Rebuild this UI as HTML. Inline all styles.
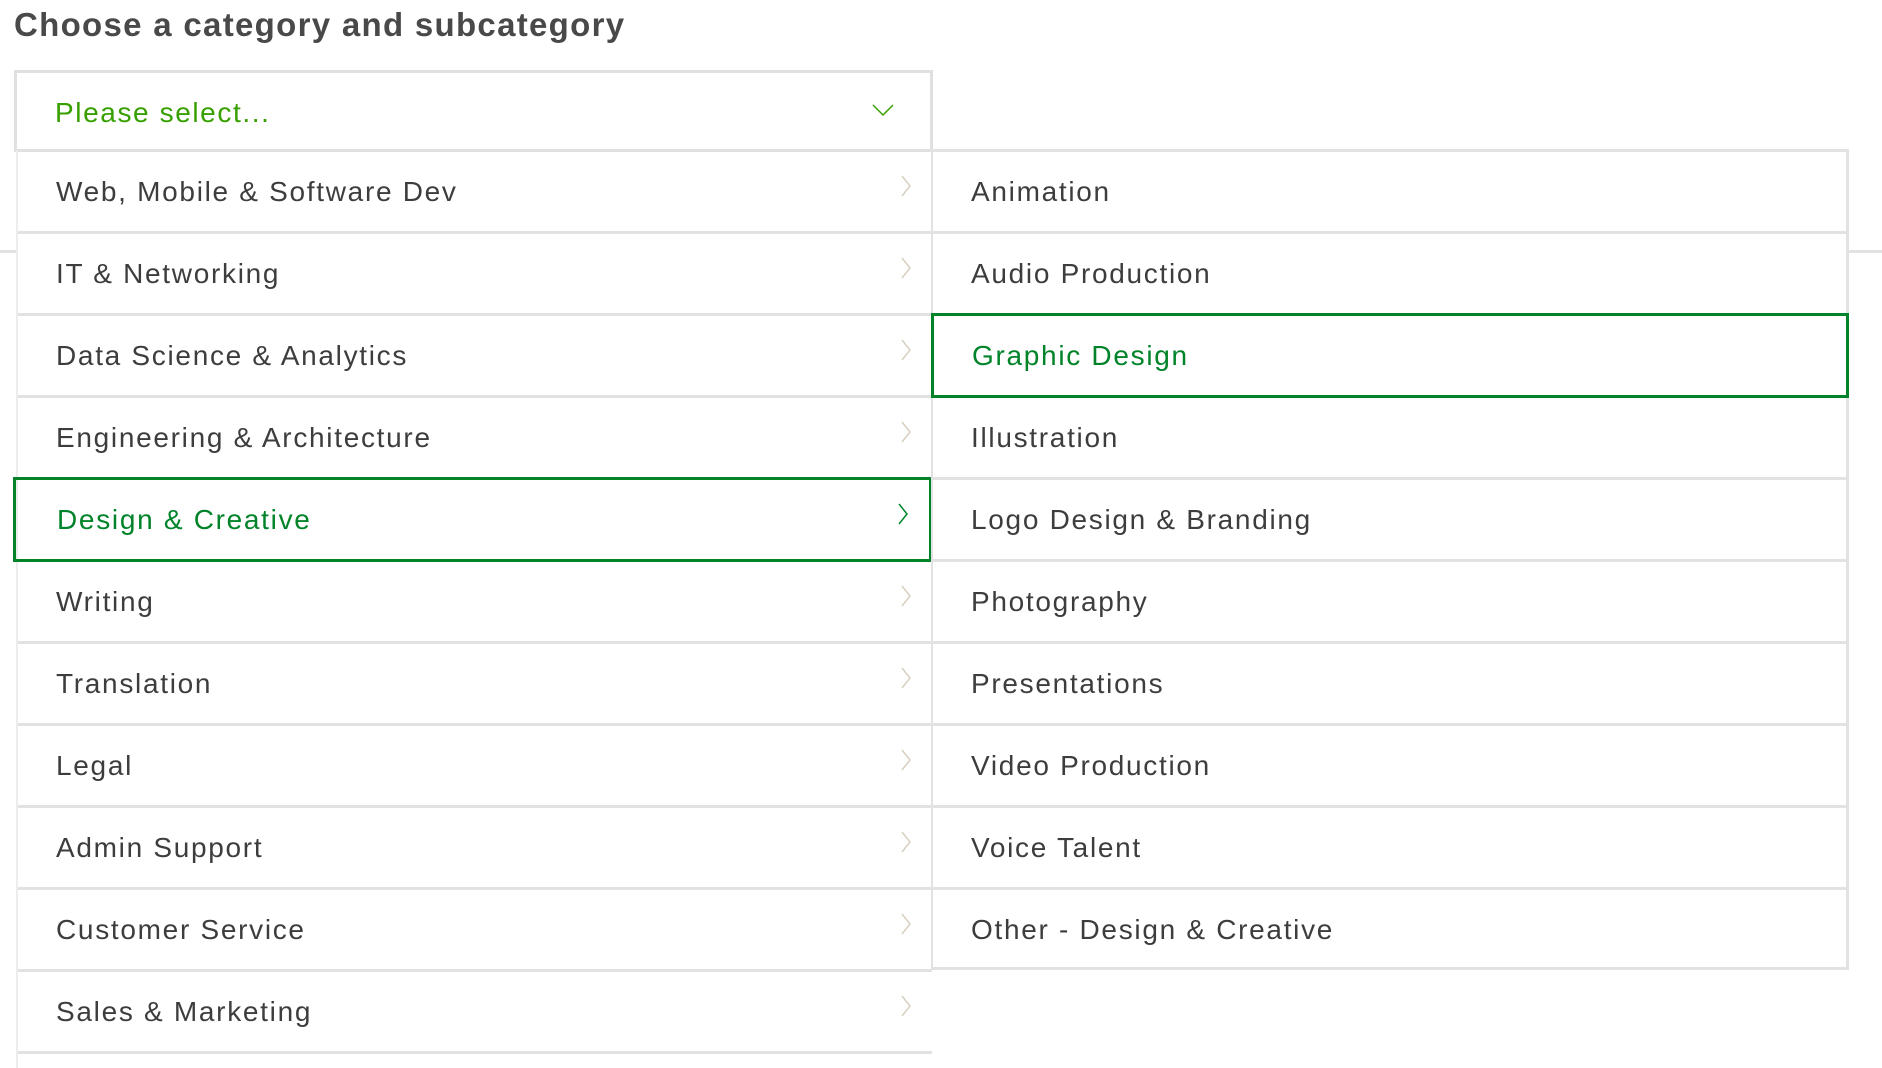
<!DOCTYPE html>
<html><head><meta charset="utf-8"><style>
*{margin:0;padding:0;box-sizing:border-box}
html,body{width:1882px;height:1068px;overflow:hidden}
body{background:#fff;font-family:"Liberation Sans",sans-serif;position:relative;color:#3d3d3d}
.t{position:absolute;left:14px;top:6px;font-size:33px;font-weight:bold;color:#494949;letter-spacing:1.3px}
.hl{position:absolute;left:0;top:250px;width:1882px;height:3px;background:#e2e2e2}
.sel{position:absolute;left:14px;top:70px;width:919px;height:82px;border:3px solid #e0e0e0;border-bottom:none;background:#fff}
.sel span{position:absolute;left:38px;top:24px;font-size:28px;color:#37a000;letter-spacing:1.6px}
.sel svg{position:absolute;right:36px;top:30px}
.left{position:absolute;left:16px;top:149px;width:916px;height:930px;background:#fff;border-left:2px solid #eceeee;border-top:3px solid #e0e0e0}
.right{position:absolute;left:931px;top:149px;width:918px;height:821px;background:#fff;border:3px solid #e2e2e2;border-left:2px solid #e2e2e2}
.row{position:relative;height:82px;border-bottom:3px solid #e2e2e2;font-size:28px;letter-spacing:1.7px;line-height:79px;padding-left:38px}
.right .row{padding-left:38px}
.right .row:last-child{border-bottom:none}
.row svg{position:absolute;right:20px;top:22px}
.act{border:3px solid #008329;color:#008329;margin-left:-5px;margin-top:-3px;height:85px;padding-left:41px}
.right .act{margin-left:-2px;margin-right:-3px;padding-left:38px}
</style></head><body>
<div class="t">Choose a category and subcategory</div>
<div class="hl"></div>
<div class="sel"><span>Please select...</span><svg width="22" height="14" viewBox="0 0 22 14"><path d="M1 2 L11 12 L21 2" fill="none" stroke="#37a000" stroke-width="1.5"/></svg></div>
<div class="left">
<div class="row">Web, Mobile &amp; Software Dev<svg width="12" height="24"><path d="M2 2 L10 12 L2 22" fill="none" stroke="#d8cfc0" stroke-width="1.5"/></svg></div>
<div class="row">IT &amp; Networking<svg width="12" height="24"><path d="M2 2 L10 12 L2 22" fill="none" stroke="#d8cfc0" stroke-width="1.5"/></svg></div>
<div class="row">Data Science &amp; Analytics<svg width="12" height="24"><path d="M2 2 L10 12 L2 22" fill="none" stroke="#d8cfc0" stroke-width="1.5"/></svg></div>
<div class="row">Engineering &amp; Architecture<svg width="12" height="24"><path d="M2 2 L10 12 L2 22" fill="none" stroke="#d8cfc0" stroke-width="1.5"/></svg></div>
<div class="row act">Design &amp; Creative<svg width="12" height="24"><path d="M2 2 L10 12 L2 22" fill="none" stroke="#008329" stroke-width="1.5"/></svg></div>
<div class="row">Writing<svg width="12" height="24"><path d="M2 2 L10 12 L2 22" fill="none" stroke="#d8cfc0" stroke-width="1.5"/></svg></div>
<div class="row">Translation<svg width="12" height="24"><path d="M2 2 L10 12 L2 22" fill="none" stroke="#d8cfc0" stroke-width="1.5"/></svg></div>
<div class="row">Legal<svg width="12" height="24"><path d="M2 2 L10 12 L2 22" fill="none" stroke="#d8cfc0" stroke-width="1.5"/></svg></div>
<div class="row">Admin Support<svg width="12" height="24"><path d="M2 2 L10 12 L2 22" fill="none" stroke="#d8cfc0" stroke-width="1.5"/></svg></div>
<div class="row">Customer Service<svg width="12" height="24"><path d="M2 2 L10 12 L2 22" fill="none" stroke="#d8cfc0" stroke-width="1.5"/></svg></div>
<div class="row">Sales &amp; Marketing<svg width="12" height="24"><path d="M2 2 L10 12 L2 22" fill="none" stroke="#d8cfc0" stroke-width="1.5"/></svg></div>
<div class="row"></div>
</div>
<div class="right">
<div class="row">Animation</div>
<div class="row">Audio Production</div>
<div class="row act">Graphic Design</div>
<div class="row">Illustration</div>
<div class="row">Logo Design &amp; Branding</div>
<div class="row">Photography</div>
<div class="row">Presentations</div>
<div class="row">Video Production</div>
<div class="row">Voice Talent</div>
<div class="row">Other - Design &amp; Creative</div>
</div>
</body></html>
